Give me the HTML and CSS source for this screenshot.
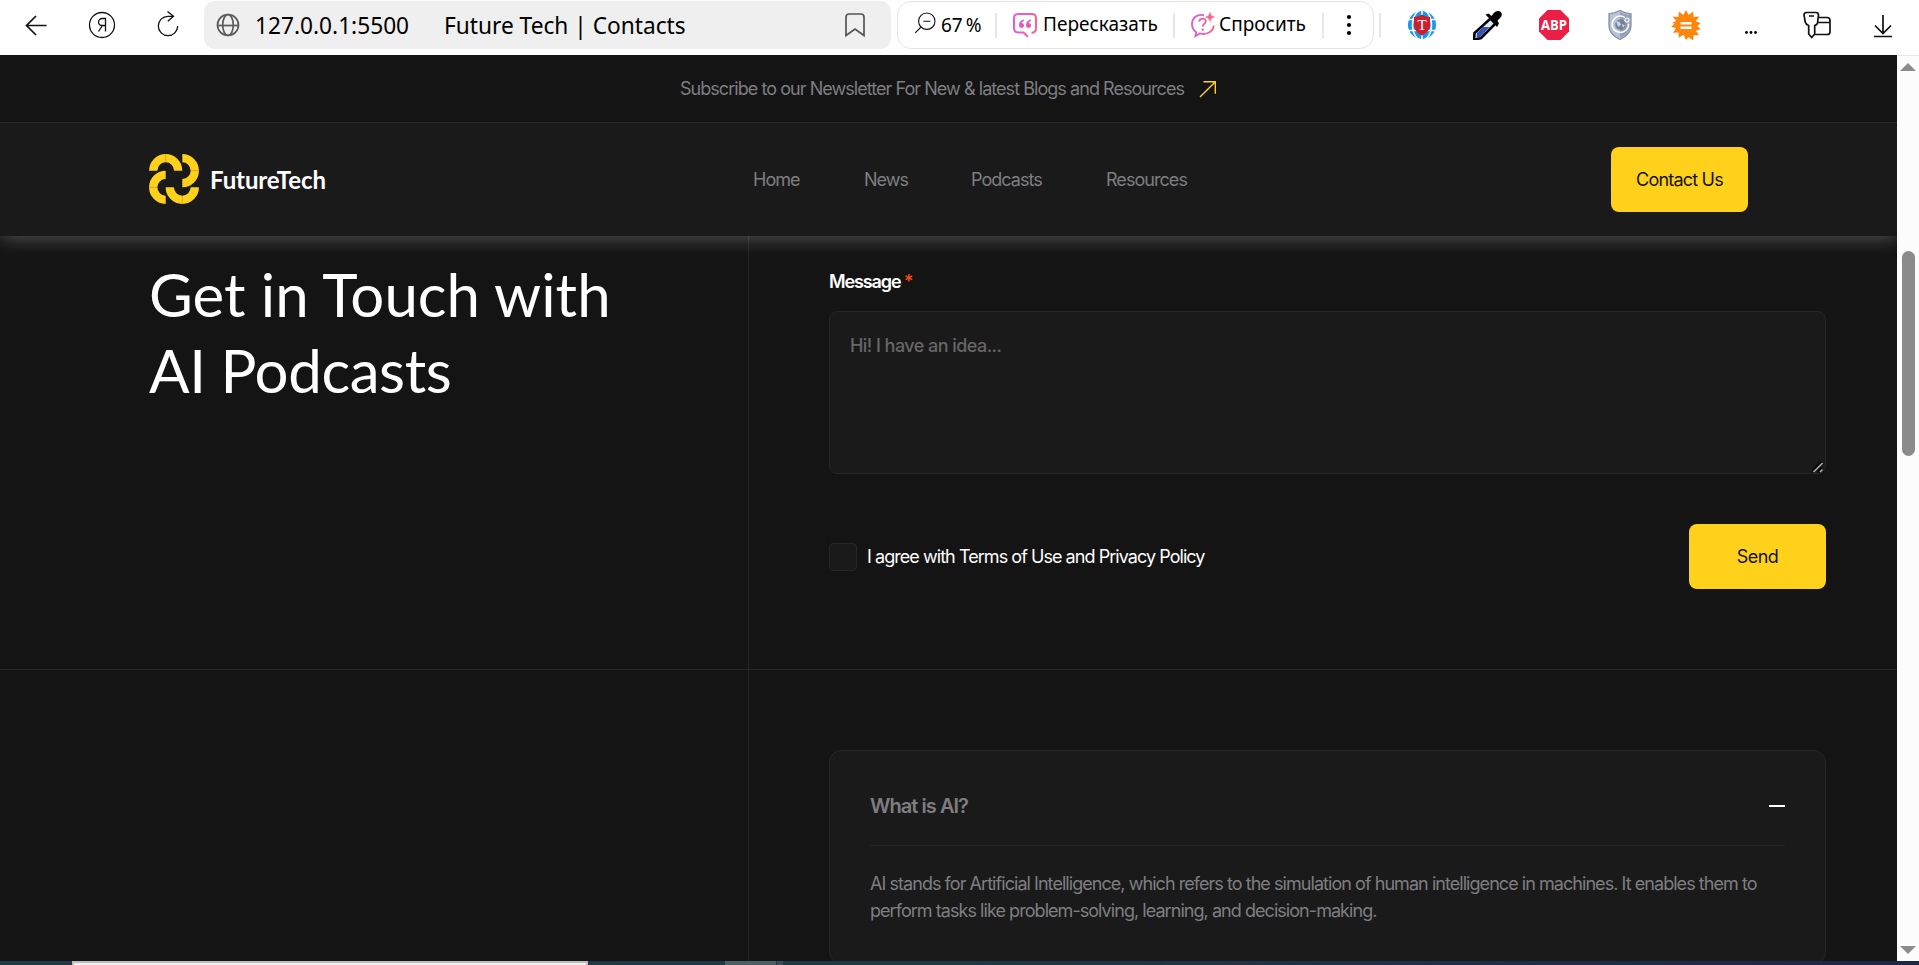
FILE: index.html
```html
<!DOCTYPE html>
<html lang="en">
<head>
<meta charset="utf-8">
<title>Future Tech | Contacts</title>
<link rel="stylesheet" href="styles.css">
</head>
<body>
<div class="browser">
  <div class="toolbar">
    <div class="nav-icons">
      <svg width="30" height="30" viewBox="0 0 30 30" class="line"><path d="M25.500 15.500H6M15 6l-9.500 9.500L15 25"/></svg>
      <svg width="30" height="30" viewBox="0 0 30 30" class="line thin"><circle cx="15" cy="15" r="12.500"/><path d="M18.500 21.500V8.500h-3.200c-5 0-5 7 0 7h3.200M15.500 15.500L11.500 21.500"/></svg>
      <svg width="30" height="30" viewBox="0 0 30 30" class="line thin"><path d="M24.700 16a9.700 9.700 0 1 1-9.700-9.700h5.500M14.500 1.500l6 4.800-5.700 5"/></svg>
    </div>
    <div class="address">
      <svg class="globe" width="24" height="24" viewBox="0 0 24 24"><g fill="none" stroke="#5a5a5a" stroke-width="1.700"><circle cx="12" cy="12" r="10.500"/><ellipse cx="12" cy="12" rx="5.300" ry="10.500"/><path d="M1.500 12.500h21"/></g></svg>
      <span class="url">127.0.0.1:5500</span>
      <span class="tab-title">Future Tech | Contacts</span>
      <svg class="bookmark" width="22" height="26" viewBox="0 0 22 26"><path d="M2 23.500V5a3 3 0 0 1 3-3h12a3 3 0 0 1 3 3v18.500l-9-6.500z" fill="none" stroke="#555" stroke-width="1.700"/></svg>
    </div>
    <div class="actions">
      <svg class="loupe" width="22" height="22" viewBox="0 0 22 22"><g fill="none" stroke="#111" stroke-width="1.100"><circle cx="12.800" cy="9.200" r="8.200"/><path d="M9.300 9.200h7M7 15l-5.800 5.800"/></g></svg>
      <span class="percent">67 %</span>
      <i class="sep"></i>
      <svg class="quote" width="26" height="26" viewBox="0 0 26 26"><defs><linearGradient id="pk" x1="0" x2="1"><stop offset="0" stop-color="#e55ad8"/><stop offset="1" stop-color="#f5648c"/></linearGradient></defs><path d="M19.500 20.800c3.300 0 4.500-1.500 4.500-4.800V6.500C24 3.200 22.800 2 19.500 2h-13C3.200 2 2 3.200 2 6.500V16c0 3.300 1.200 4.500 4.500 4.500h5l4.500 4.300" fill="none" stroke="url(#pk)" stroke-width="2"/><path d="M12 7.500c-3 .7-5 2.500-5 5.400 0 1.900 1 2.900 2.500 2.900s2.500-1 2.500-2.400-1-2.300-2.300-2.400c.2-1 1-1.700 2.300-2zM19 7.500c-3 .7-5 2.500-5 5.400 0 1.900 1 2.900 2.500 2.900s2.500-1 2.500-2.400-1-2.300-2.300-2.400c.2-1 1-1.700 2.300-2z" fill="#e955b8"/></svg>
      <span class="retell">Пересказать</span>
      <i class="sep"></i>
      <svg class="ask" width="26" height="26" viewBox="0 0 26 26"><g fill="none" stroke="url(#pk)" stroke-width="1.900"><path d="M14 3.200C6.500 1.500 2 6.500 2 12c0 4 1.800 6.500 4.200 8.200L5.500 24l4.300-2.600C17.500 23.500 23.500 19 23.600 13.500"/><path d="M9.300 9.700c.3-4.200 6.700-3.800 6.500-.2-.1 2.300-3.100 2.200-3.100 5"/></g><circle cx="12.700" cy="17.600" r="1.200" fill="#ed5fb9"/><path d="M20 .5q.6 4 4.500 4.500-3.900.6-4.500 4.500-.6-3.900-4.500-4.500Q19.400 4.500 20 .5z" fill="#f5648c" stroke="#f5648c" stroke-width=".6"/></svg>
      <span class="query">Спросить</span>
      <i class="sep"></i>
      <svg class="kebab" width="6" height="22" viewBox="0 0 6 22"><circle cx="3" cy="3" r="2.100"/><circle cx="3" cy="11" r="2.100"/><circle cx="3" cy="19" r="2.100"/></svg>
    </div>
    <i class="sep outer"></i>
    <div class="extensions">
      <svg width="30" height="30" viewBox="0 0 30 30"><circle cx="15" cy="15" r="14" fill="#1798ee"/><g stroke="#fff" stroke-width="1.500" fill="none"><path d="M1 9.500h28M1 20.500h28M15 1v28"/><ellipse cx="15" cy="15" rx="9.500" ry="15"/></g><path d="M15 4.500c2.500 1.500 5 2.300 8 2.500v8c0 5-4 8.500-8 10.500-4-2-8-5.500-8-10.500V7c3-.2 5.500-1 8-2.500z" fill="#cf1d2b"/><text x="15" y="20.200" class="t-letter">T</text></svg>
      <svg width="30" height="30" viewBox="0 0 30 30"><path d="M17.500 8.500l5 5L8 28l-7 2 .5-7z" fill="#d9edf5" stroke="#000" stroke-width="2.600"/><path d="M10 17h6.500L7 27l-3.500 1 .5-5z" fill="#3355b8"/><path d="M12.500 4.500l3-1 3 2.500C21 2 24 0 27 1.500c3 2 2.500 5-2.500 9l1.500 3-2 3.500z"/></svg>
      <svg width="30" height="30" viewBox="0 0 30 30"><path d="M8.500 0h13L30 8.500v13L21.500 30h-13L0 21.500v-13z" fill="#ed1e45"/><text x="15" y="20" class="abp" textLength="26" lengthAdjust="spacingAndGlyphs">ABP</text></svg>
      <svg width="30" height="30" viewBox="0 0 30 30"><path d="M15 .5c4 2.300 7 3 11 3.300v12c0 6.500-5 11-11 13.700C9 26.800 4 22.300 4 15.800v-12C8 3.500 11 2.800 15 .5z" fill="#b9c3d8" stroke="#8290a8" stroke-width="1.300"/><path d="M15 2c4 2 7 2.600 10 3v11c0 6-4.500 9.700-10 12z" fill="#94a1b8"/><circle cx="15.500" cy="14.500" r="5.300" fill="#74839d"/><path d="M11 11l4 1 1 3-3 2zM17 14l3 1-2 3z" fill="#c9d2e2"/><path d="M20 7.500a8.200 8.200 0 1 0 3.500 6" fill="none" stroke="#fff" stroke-width="1.500"/><circle cx="22" cy="10" r="2" fill="none" stroke="#fff" stroke-width="1.200"/></svg>
      <svg width="30" height="30" viewBox="0 0 30 30"><path d="M15 0l2.700 5 4.400-3.600.6 5.700 5.700-.6-3.500 4.400 4.800 2.300-3.500 2.600 3.500 3.400-4.800 1.500 3.100 4.500-5.500-.3-.3 5.400-4.700-3L15 30l-2.500-5.200-4.700 3-.3-5.400-5.500.3 3.100-4.500-4.800-1.500 3.500-3.400L.3 13.200l4.800-2.300L1.600 6.500l5.700.6.6-5.700L12.300 5z" fill="#ff850c"/><path d="M9.500 13.300h11M9.500 17.700h11" stroke="#fff" stroke-width="2.600"/></svg>
      <svg width="30" height="30" viewBox="0 0 30 30"><circle cx="10.500" cy="22.500" r="1.400"/><circle cx="15" cy="22.500" r="1.400"/><circle cx="19.500" cy="22.500" r="1.400"/></svg>
      <svg width="30" height="30" viewBox="0 0 30 30" class="line"><path d="M4.500 2.500h9.500q2.500 0 2.500 2.500l-1 8c0 1.500-2.800 2.500-2.800 2.500V24l-3 3.500-3-3.500v-8.500C4 14.500 3.500 13 3.200 12L2 5q0-2.500 2.500-2.500zM7 6h5M17 7.500h8q3 0 3 3V22q0 2.500-3 2.500H12.700M16.500 12.500H28"/></svg>
      <svg width="30" height="30" viewBox="0 0 30 30" class="line"><path d="M15 5v18M7 15.500l8 8 8-8M6 26.500h18"/></svg>
    </div>
  </div>

  <div class="viewport">
    <div class="page">
      <a class="banner"><span>Subscribe to our Newsletter For New &amp; latest Blogs and Resources</span>
        <svg width="18" height="18" viewBox="0 0 18 18"><path d="M1 17L16.300 1.700M4.500 1.700h11.800v12" fill="none" stroke="#ffd11a" stroke-width="1.400"/></svg></a>
      <header class="header">
        <a class="brand">
          <svg width="50" height="50" viewBox="0 0 50 50"><g fill="none" stroke="#ffd11a" stroke-width="8.300"><path d="M4.200 16.700a12.500 12.500 0 0 1 25 0"/><path d="M33.300 4.200a12.500 12.500 0 0 1 0 25"/><path d="M45.800 33.300a12.500 12.500 0 0 1-25 0"/><path d="M16.700 45.800a12.500 12.500 0 0 1 0-25"/></g><path d="M16.700 0v8.300M41.700 16.700H50M33.300 41.700V50M0 33.300h8.300" stroke="#b3941b" stroke-width=".6"/></svg>
          <span>FutureTech</span>
        </a>
        <nav class="menu"><a class="m-home">Home</a><a class="m-news">News</a><a class="m-pod">Podcasts</a><a class="m-res">Resources</a></nav>
        <a class="button contact">Contact Us</a>
      </header>
      <section class="row touch">
        <div class="side"><h1>Get in Touch with<br><span>AI Podcasts</span></h1></div>
        <form class="form">
          <label class="label">Message <b>*</b></label>
          <div class="field">
            <textarea class="message" placeholder="Hi! I have an idea..."></textarea>
            <svg class="grip" width="12" height="12" viewBox="0 0 12 12"><path d="M0 11L10 1M6.500 11L10 7.500" stroke="#000" stroke-width="3"/><path d="M1.500 11L10.500 2M8 11l2.500-2.500" stroke="#b5b5b5" stroke-width="1.500"/></svg>
          </div>
          <div class="form-end">
            <label class="agree"><i class="box"></i><span>I agree with Terms of Use and Privacy Policy</span></label>
            <button type="button" class="button">Send</button>
          </div>
        </form>
      </section>
      <section class="row faq">
        <div class="side"></div>
        <div class="faq-list">
          <article class="card">
            <div class="question"><h2>What is AI?</h2><i class="minus"></i></div>
            <p><span>AI stands for Artificial Intelligence, which refers to the simulation of human intelligence in machines. It enables them to</span><br><span>perform tasks like problem-solving, learning, and decision-making.</span></p>
          </article>
        </div>
      </section>
    </div>
    <div class="scrollbar">
      <svg width="16" height="8" viewBox="0 0 16 8"><path d="M0 8l8-8 8 8z" fill="#8b8b8b"/></svg>
      <i class="thumb"></i>
      <svg class="down" width="16" height="8" viewBox="0 0 16 8"><path d="M0 0l8 8 8-8z" fill="#8b8b8b"/></svg>
    </div>
  </div>
  <div class="taskbar"><i class="task-open"></i><i class="task-a"></i><i class="task-b"></i></div>
</div>
</body>
</html>
```

FILE: styles.css
```css
* { box-sizing: border-box; }
body { margin: 0; background: #141414; overflow: hidden; font-family: Inter, sans-serif; }
svg { display: block; flex: none; }
.browser { display: grid; grid-template-rows: 55px 906px 4px; width: 1919px; height: 965px; }

/* browser toolbar */
.toolbar { display: flex; align-items: flex-start; background: #fff; font-family: "Noto Sans", sans-serif; color: #000; }
.nav-icons { display: flex; gap: 36px; width: 204px; padding: 10px 0 0 21px; }
.line { fill: none; stroke: #111; stroke-width: 1.7; }
.thin { stroke-width: 1.3; }
.address { display: flex; align-items: center; width: 687px; height: 48px; margin-top: 1px; padding-left: 12px; background: #efefef; border-radius: 11px; white-space: nowrap; font-size: 22.7px; }
.url { width: 189px; margin-left: 15px; }
.tab-title { width: 401px; }
.bookmark { margin-left: -1px; }
.actions { display: flex; align-items: center; width: 477px; height: 48px; margin: 1px 0 0 6px; padding-left: 16px; border: 1px solid #e4e4e4; border-radius: 14px; font-size: 19px; white-space: nowrap; }
.loupe { margin-top: -4px; }
.percent { width: 54px; margin-left: 5px; word-spacing: -2px; }
.sep { flex: none; width: 2px; height: 25px; background: #e7e7e7; }
.sep.outer { height: 24px; margin: 13px 0 0 5px; }
.quote { margin-left: 15px; }
.retell { width: 130px; margin: -3px 0 0 5px; }
.ask { margin-left: 15px; }
.query { width: 103px; margin: -3px 0 0 3px; }
.kebab { margin-left: 22px; }
.extensions { display: flex; gap: 35.9px; margin: 10px 0 0 26px; }
.t-letter { fill: #fff; font: 15px "Liberation Serif", serif; text-anchor: middle; }
.abp { fill: #fff; font: bold 14px "Open Sans", sans-serif; text-anchor: middle; }

/* page */
.viewport { display: flex; min-height: 0; overflow: hidden; }
.page { width: 1897px; height: 906px; overflow: hidden; background: #141414; color: #fff; font-size: 18px; letter-spacing: -0.95px; }
.banner { position: relative; z-index: 2; display: flex; align-items: center; justify-content: center; gap: 15px; height: 67px; background: #141414; color: #7e7e81; }
.banner span { white-space: nowrap; }
.header { position: relative; z-index: 1; display: flex; align-items: center; height: 114px; padding: 0 149px 1px; background: #1a1a1a; border-top: 1px solid #262626; box-shadow: 0 0 20px rgba(255, 255, 255, .33); }
.brand { display: flex; align-items: center; gap: 11px; width: 604px; font: bold 24px Lato, sans-serif; letter-spacing: -0.1px; }
.menu { display: flex; flex: 1; color: #7e7e81; }
.m-home { width: 111px; }
.m-news { width: 107px; }
.m-pod { width: 135px; }
.button { display: flex; align-items: center; justify-content: center; width: 137px; height: 65px; padding: 0; border: 0; border-radius: 8px; background: #ffd11a; color: #141414; font: 18px Inter, sans-serif; letter-spacing: -0.6px; }
.contact { letter-spacing: -0.8px; }
.row { display: grid; grid-template-columns: 749px 1148px; }
.touch { height: 434px; border-bottom: 1px solid #262626; }
.side { padding: 20px 0 0 149px; border-right: 1px solid #262626; }
h1 { margin: 0; font: 400 60px/76px Lato, sans-serif; letter-spacing: 0; white-space: nowrap; }
h1 span { letter-spacing: -0.4px; }
.form { padding: 34px 71px 0 80px; }
.label { display: block; height: 24px; line-height: 24px; font-weight: 600; letter-spacing: -1.1px; }
.label b { color: #ff4a0d; font-weight: 500; }
.field { position: relative; margin: 17px 0 50px; }
.message { display: block; width: 997px; height: 163px; padding: 20px; background: #1a1a1a; border: 1px solid #262626; border-radius: 8px; color: #fff; font: 500 18px/27px Inter, sans-serif; letter-spacing: -0.55px; resize: none; }
.message::placeholder { color: #666; }
.grip { position: absolute; right: 2px; bottom: 1px; }
.form-end { display: flex; align-items: center; justify-content: space-between; }
.agree { display: flex; align-items: center; gap: 10px; }
.box { width: 28px; height: 28px; background: #1a1a1a; border: 1px solid #262626; border-radius: 4px; }
.faq { height: 400px; }
.faq-list { padding: 80px 71px 0 80px; }
.card { height: 214px; padding: 0 40px; background: #1a1a1a; border: 1px solid #262626; border-radius: 12px; color: #7e7e81; }
.question { display: flex; align-items: center; justify-content: space-between; height: 95px; padding-top: 15px; border-bottom: 1px solid #262626; }
.question h2 { margin: 0; font-size: 20px; font-weight: 600; letter-spacing: -0.95px; }
.minus { width: 16px; height: 2px; background: #fff; }
.card p { margin: 24px 0 0; line-height: 27px; white-space: nowrap; }

.scrollbar { display: flex; flex-direction: column; align-items: center; width: 22px; padding: 7px 0; background: #fcfcfc; border-top: 1px solid #e8e8e8; }
.thumb { width: 13px; height: 205px; margin: 180px 0 auto; border-radius: 7px; background: #8b8b8b; }
.taskbar { display: flex; background: linear-gradient(90deg, #203a45, #203744 50%, #1a2846); }
.task-open { width: 516px; margin-left: 72px; background: #f1f1f1; border: 2px solid #bdbdbd; border-bottom: 0; }
.task-a { width: 51px; margin-left: 137px; background: #4c606a; }
.task-b { width: 6px; margin-left: 1px; background: #3b4c59; }
```
